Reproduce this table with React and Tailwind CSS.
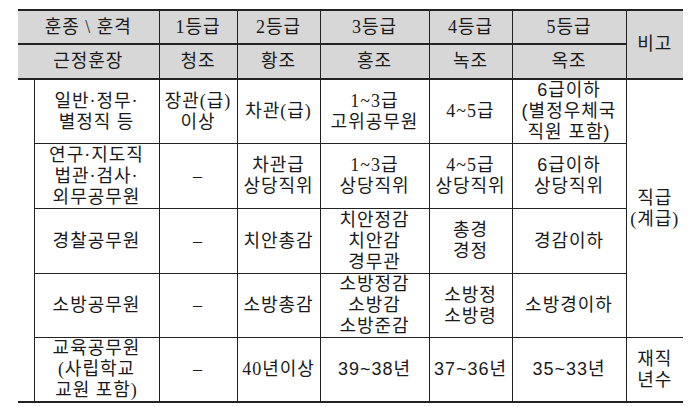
import React from 'react';

const serif = "font-['Liberation_Serif','Noto_Sans_CJK_KR',serif]";
const sans = "font-['Liberation_Sans','Noto_Sans_CJK_KR',sans-serif]";

const Th = ({ children, className = '', ...rest }) => (
  <th
    {...rest}
    className={`border border-[#222] bg-[#d7d7d7] text-center align-middle font-normal leading-[21px] whitespace-nowrap p-0 ${serif} ${className}`}
  >
    {children}
  </th>
);

const Td = ({ children, className = '', font = serif, ...rest }) => (
  <td
    {...rest}
    className={`border border-[#222] text-center align-middle leading-[21px] whitespace-nowrap p-0 ${font} ${className}`}
  >
    {children}
  </td>
);

const App = () => {
  return (
    <div className="w-[700px] h-[407px] bg-white pt-[9px] pl-[18px] text-[18px] tracking-[1px] text-[#1a1a1a] overflow-hidden">
      <table className="border-collapse table-fixed w-[665px]">
        <colgroup>
          <col className="w-[16px]" />
          <col className="w-[125px]" />
          <col className="w-[78px]" />
          <col className="w-[83px]" />
          <col className="w-[109px]" />
          <col className="w-[83px]" />
          <col className="w-[114px]" />
          <col className="w-[57px]" />
        </colgroup>
        <thead>
          {/* 훈격 header */}
          <tr className="h-[34px]">
            <Th colSpan={2} className="border-l-0 border-t-2 border-b-2">훈종 \ 훈격</Th>
            <Th className="border-t-2 border-b-2">1등급</Th>
            <Th className="border-t-2 border-b-2">2등급</Th>
            <Th className="border-t-2 border-b-2">3등급</Th>
            <Th className="border-t-2 border-b-2">4등급</Th>
            <Th className="border-t-2 border-b-2">5등급</Th>
            <Th rowSpan={2} className="border-r-0 border-t-2 border-b-2">비고</Th>
          </tr>
          <tr className="h-[35px]">
            <Th colSpan={2} className="border-l-0 border-b-2">근정훈장</Th>
            <Th className="border-b-2">청조</Th>
            <Th className="border-b-2">황조</Th>
            <Th className="border-b-2">홍조</Th>
            <Th className="border-b-2">녹조</Th>
            <Th className="border-b-2">옥조</Th>
          </tr>
        </thead>
        <tbody>
          <tr className="h-[63px]">
            <Td rowSpan={5} className="border-l-0 border-b-2" />
            <Td>일반·정무·<br />별정직 등</Td>
            <Td>장관(급)<br />이상</Td>
            <Td>차관(급)</Td>
            <Td>1~3급<br />고위공무원</Td>
            <Td>4~5급</Td>
            <Td font={sans}>6급이하<br />(별정우체국<br />직원 포함)</Td>
            <Td rowSpan={4} className="border-r-0">직급<br />(계급)</Td>
          </tr>
          <tr className="h-[65px]">
            <Td>연구·지도직<br />법관·검사·<br />외무공무원</Td>
            <Td>–</Td>
            <Td>차관급<br />상당직위</Td>
            <Td>1~3급<br />상당직위</Td>
            <Td>4~5급<br />상당직위</Td>
            <Td font={sans}>6급이하<br />상당직위</Td>
          </tr>
          <tr className="h-[65px]">
            <Td>경찰공무원</Td>
            <Td>–</Td>
            <Td>치안총감</Td>
            <Td>치안정감<br />치안감<br />경무관</Td>
            <Td>총경<br />경정</Td>
            <Td>경감이하</Td>
          </tr>
          <tr className="h-[64px]">
            <Td>소방공무원</Td>
            <Td>–</Td>
            <Td>소방총감</Td>
            <Td>소방정감<br />소방감<br />소방준감</Td>
            <Td>소방정<br />소방령</Td>
            <Td>소방경이하</Td>
          </tr>
          <tr className="h-[64px]">
            <Td className="border-b-2">교육공무원<br />(사립학교<br />교원 포함)</Td>
            <Td className="border-b-2">–</Td>
            <Td className="border-b-2">40년이상</Td>
            <Td font={sans} className="border-b-2">39~38년</Td>
            <Td font={sans} className="border-b-2">37~36년</Td>
            <Td font={sans} className="border-b-2">35~33년</Td>
            <Td className="border-r-0 border-b-2">재직<br />년수</Td>
          </tr>
        </tbody>
      </table>
    </div>
  );
};

export default App;
